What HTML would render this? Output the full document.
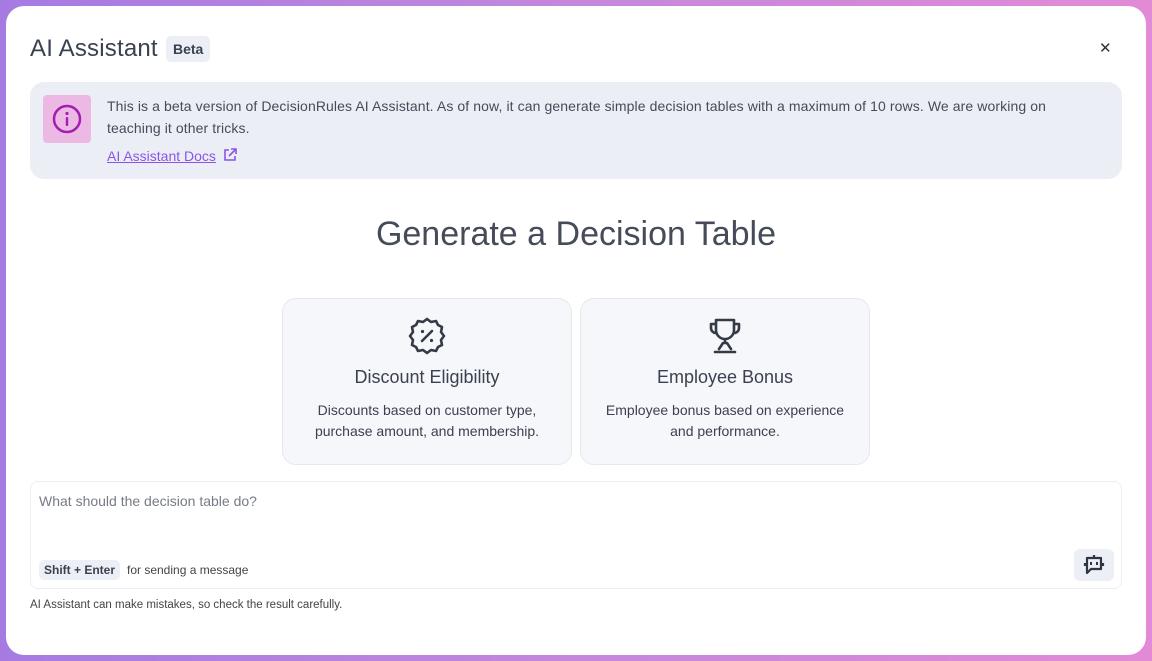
<!DOCTYPE html>
<html><head><meta charset="utf-8"><style>
*{box-sizing:border-box;margin:0;padding:0}
body{width:1152px;height:661px;overflow:hidden;background:linear-gradient(90deg,#a57be2,#c487dc 50%,#e28ad6);font-family:"Liberation Sans",sans-serif;color:#343a46;position:relative}
.modal{position:absolute;left:6px;top:6px;width:1140px;height:649px;background:#fff;border-radius:18px}
.title{position:absolute;left:24px;top:29px;font-size:24px;color:#3b4150;letter-spacing:0.2px}
.beta{position:absolute;left:160px;top:30px;background:#eceff5;border-radius:5px;font-size:14px;font-weight:bold;padding:5px 7px;color:#3b4150}
.close{position:absolute;left:1093px;top:33px;font-size:15px;color:#333}
.info{position:absolute;left:24px;top:76px;width:1092px;height:97px;background:#eceef6;border-radius:14px}
.ico{position:absolute;left:13px;top:13px;width:48px;height:48px;background:#ebb9e4;border-radius:4px}
.info p{position:absolute;left:77px;top:13px;width:960px;font-size:14px;line-height:22px;color:#454b58;letter-spacing:0.1px}
.info a{position:absolute;left:77px;top:66px;font-size:14px;color:#8a55e6;text-decoration:underline}
h1{position:absolute;left:0;width:1140px;text-align:center;top:209px;font-size:34px;font-weight:normal;color:#454b58;letter-spacing:0px}
.card{position:absolute;top:292px;width:290px;height:167px;background:#f6f7fb;border:1px solid #e6e8ef;border-radius:14px;text-align:center}
.card .t{position:absolute;top:68px;width:100%;font-size:18px;color:#3b4150}
.card .d{position:absolute;top:101px;width:100%;font-size:14px;line-height:21px;color:#3b4150}
.card svg{position:absolute;top:17px;left:124px}
.input{position:absolute;left:24px;top:475px;width:1092px;height:108px;border:1px solid #eceef3;border-radius:8px}
.ph{position:absolute;left:8px;top:11px;font-size:14px;color:#767b86}
.kbd{position:absolute;left:8px;top:78px;background:#eceff5;border-radius:5px;font-size:12px;font-weight:bold;padding:3px 5px;color:#3b4150}
.hint{position:absolute;left:96px;top:81px;font-size:12px;color:#444}
.bot{position:absolute;left:1043px;top:67px;width:40px;height:32px;background:#eceff5;border-radius:6px}
.foot{position:absolute;left:24px;top:593px;font-size:11.5px;color:#444}
</style></head><body>
<div class="modal">
<div class="title">AI Assistant</div>
<div class="beta">Beta</div>
<div class="close">✕</div>
<div class="info">
<div class="ico"><svg width="48" height="48" viewBox="0 0 48 48"><circle cx="24" cy="24" r="13" fill="none" stroke="#a51eb0" stroke-width="2.5"/><circle cx="24" cy="18.5" r="1.6" fill="#a51eb0"/><rect x="22.8" y="22" width="2.4" height="9" rx="1" fill="#a51eb0"/></svg></div>
<p>This is a beta version of DecisionRules AI Assistant. As of now, it can generate simple decision tables with a maximum of 10 rows. We are working on teaching it other tricks.</p>
<a>AI Assistant Docs<svg width="14" height="14" viewBox="0 0 14 14" style="vertical-align:-1px;margin-left:7px"><path d="M6 2H2v10h10V8M8 1h5v5M13 1L6 8" fill="none" stroke="#8a55e6" stroke-width="1.6"/></svg></a>
</div>
<h1>Generate a Decision Table</h1>
<div class="card" style="left:276px"><svg width="40" height="40" viewBox="0 0 40 40"><path d="M20 3l4 3 5-1 2 4 4 2-1 5 3 4-3 4 1 5-4 2-2 4-5-1-4 3-4-3-5 1-2-4-4-2 1-5-3-4 3-4-1-5 4-2 2-4 5 1z" fill="none" stroke="#343a46" stroke-width="2.6" stroke-linejoin="round"/><path d="M15 25l10-10" stroke="#343a46" stroke-width="2.6" stroke-linecap="round"/><circle cx="15.5" cy="15.5" r="1.6" fill="#343a46"/><circle cx="24.5" cy="24.5" r="1.6" fill="#343a46"/></svg><div class="t">Discount Eligibility</div><div class="d">Discounts based on customer type,<br>purchase amount, and membership.</div></div>
<div class="card" style="left:574px"><svg width="40" height="40" viewBox="0 0 40 40"><path d="M11 4h18v10a9 9 0 0 1-18 0z M11 8H6v4a5 5 0 0 0 5 5 M29 8h5v4a5 5 0 0 1-5 5 M20 23v4 M14 33l4-6h4l4 6 M10 36h20" fill="none" stroke="#343a46" stroke-width="2.6" stroke-linejoin="round" stroke-linecap="round"/></svg><div class="t">Employee Bonus</div><div class="d">Employee bonus based on experience<br>and performance.</div></div>
<div class="input">
<div class="ph">What should the decision table do?</div>
<div class="kbd">Shift + Enter</div>
<div class="hint">for sending a message</div>
<div class="bot"><svg width="40" height="32" viewBox="0 0 40 32"><path d="M20 6v3 M13 9h14v11H17l-4 4z M11 14v3 M29 14v3" fill="none" stroke="#2f3542" stroke-width="2.2" stroke-linejoin="round"/><path d="M17 13v3M23 13v3" stroke="#2f3542" stroke-width="2"/></svg></div>
</div>
<div class="foot">AI Assistant can make mistakes, so check the result carefully.</div>
</div>
</body></html>
